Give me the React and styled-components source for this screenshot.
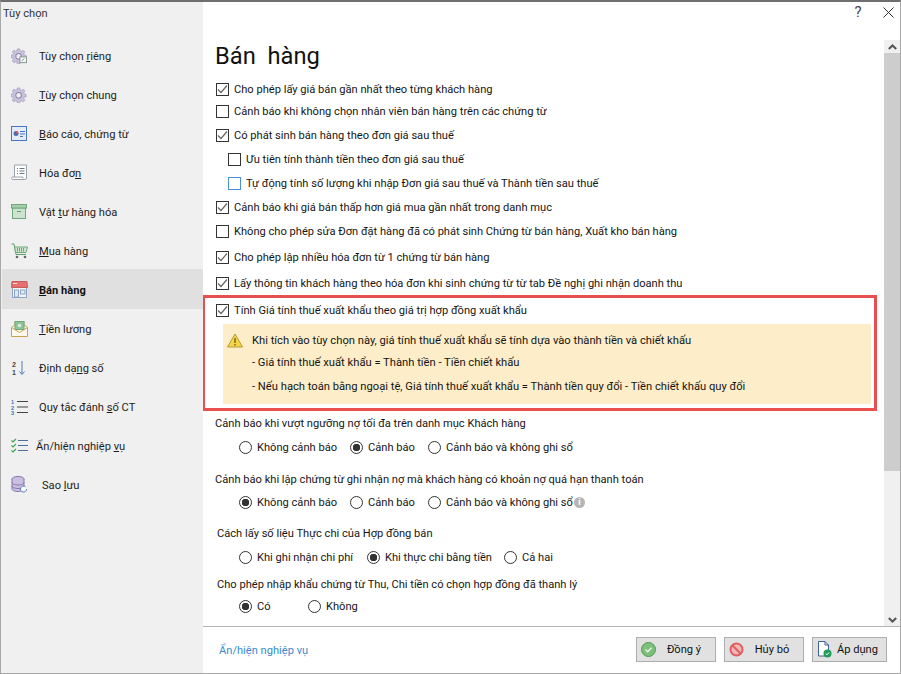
import styled, { createGlobalStyle } from 'styled-components'

const GlobalStyle = createGlobalStyle`
    html, body {
        margin: 0;
        padding: 0;
        background: #fff;
        font-family: Roboto, "Open Sans", sans-serif;
        font-size: 11.12px;
        color: #151515;
    }
`

const GearIcon = ({ badge }) => (
    <svg width="16" height="16" viewBox="0 0 18 18">
        <path d="M7.2 1h2.6l.5 2.2 1.4.6 2-1.2 1.8 1.8-1.2 2 .6 1.4 2.1.5v2.6l-2.1.5-.6 1.4 1.2 2-1.8 1.8-2-1.2-1.4.6-.5 2.2H7.2l-.5-2.2-1.4-.6-2 1.2-1.8-1.8 1.2-2-.6-1.4L0 10.700V8.100l2.100-.5.6-1.400-1.200-2 1.800-1.800 2 1.200 1.400-.6z" fill="#c9c2dc" stroke="#9c92b8" strokeWidth=".7" />
        <circle cx="8.500" cy="9.400" r="3.200" fill="#eee" stroke="#8f84ad" strokeWidth="1.200" />
        {badge && <rect x="10" y="10" width="7.500" height="6.500" fill="#f5f5f5" stroke="#7f8f8a" />}
        {badge && <path d="M12 14.500l3-2.500" stroke="#5aa06a" />}
    </svg>
)

const ReportIcon = () => (
    <svg width="17" height="16" viewBox="0 0 17 16">
        <rect x=".5" y=".5" width="15" height="14" fill="#e4ecf9" stroke="#4a74c4" />
        <circle cx="5" cy="7.500" r="2.500" fill="#4a6fb5" />
        <path d="M5 7.500V5a2.500 2.500 0 0 1 2.500 2.500z" fill="#d5556a" />
        <path d="M9 5.500h5M9 8h5M9 10.500h3" stroke="#4a74c4" />
    </svg>
)

const InvoiceIcon = () => (
    <svg width="17" height="17" viewBox="0 0 17 17">
        <path d="M3.500 13V1h12v13a1.500 1.500 0 0 1-1.500 1.500H1.500C.5 15.500.5 13 1.500 13H12v1.500" fill="#fff" stroke="#9aa3ad" />
        <path d="M6 4.500h1M6 7h1M6 9.500h1M8.500 4.500h5M8.500 7h5M8.500 9.500h5" stroke="#6b7680" />
    </svg>
)

const BoxIcon = () => (
    <svg width="16" height="15" viewBox="0 0 16 15">
        <rect x="1.500" y="4" width="13" height="10.500" fill="#cde3d0" stroke="#6da97b" />
        <rect x=".5" y=".5" width="15" height="3.500" fill="#a5cfae" stroke="#6da97b" />
        <path d="M6 7.500h4" stroke="#5d9a6c" />
    </svg>
)

const CartIcon = () => (
    <svg width="17" height="16" viewBox="0 0 17 16">
        <path d="M.5 1h2.500l2 10.500h10" fill="none" stroke="#5aa06a" />
        <path d="M3.600 4h12.900l-1.500 5.500H4.600z" fill="#cfe6d3" stroke="#6da97b" />
        <path d="M6.500 5v3.500M8.500 5v3.500M10.500 5v3.500M12.500 5v3.500" stroke="#6da97b" />
        <circle cx="6" cy="14" r="1.300" fill="#666" />
        <circle cx="14" cy="14" r="1.300" fill="#666" />
    </svg>
)

const StoreIcon = () => (
    <svg width="17" height="17" viewBox="0 0 17 17">
        <rect x="1.500" y="6" width="14" height="10.500" fill="#f4f4f4" stroke="#8da6c8" />
        <rect x="3.500" y="9" width="4" height="7" fill="#dfe8f4" stroke="#8da6c8" />
        <rect x="9.500" y="9" width="4.500" height="4" fill="#dfe8f4" stroke="#8da6c8" />
        <path d="M1 .5h15l.5 6H.5z" fill="#e66f6f" stroke="#c85c5c" />
        <path d="M2 2.500h4" stroke="#f6dede" />
    </svg>
)

const SalaryIcon = () => (
    <svg width="17" height="16" viewBox="0 0 17 16">
        <path d="M.5 6.500L4 4v-3.500h9V4l3.500 2.500v9H.5z" fill="#fdf8ec" stroke="#c9a24e" />
        <rect x="4" y=".5" width="9" height="8" fill="#8cc49a" stroke="#6da97b" />
        <circle cx="8.500" cy="4.500" r="1.800" fill="#d7ecdc" />
        <path d="M.5 6.500l8 5 8-5" fill="none" stroke="#c9a24e" />
    </svg>
)

const SortIcon = () => (
    <svg width="16" height="16" viewBox="0 0 16 16">
        <text x="1" y="7" fontSize="7" fontWeight="700" fontFamily="Liberation Sans" fill="#444">2</text>
        <text x="1" y="15" fontSize="7" fontWeight="700" fontFamily="Liberation Sans" fill="#444">1</text>
        <path d="M11 1v13M8.500 11.500L11 14.500l2.500-3" fill="none" stroke="#4f7fb8" />
    </svg>
)

const NumberedIcon = () => (
    <svg width="17" height="16" viewBox="0 0 17 16">
        <text x="0" y="5" fontSize="5.500" fontWeight="700" fontFamily="Liberation Sans" fill="#3f73b5">1</text>
        <text x="0" y="10.500" fontSize="5.500" fontWeight="700" fontFamily="Liberation Sans" fill="#3f73b5">2</text>
        <text x="0" y="16" fontSize="5.500" fontWeight="700" fontFamily="Liberation Sans" fill="#3f73b5">3</text>
        <path d="M6 2.500h11M6 8h11M6 13.500h11" stroke="#444" />
    </svg>
)

const CheckListIcon = () => (
    <svg width="17" height="15" viewBox="0 0 17 15">
        <path d="M.5 2.500l1.500 1.500L5 1M.5 7.500l1.500 1.500 3-3M.5 12.500l1.500 1.500 3-3" fill="none" stroke="#3aa655" strokeWidth="1.200" />
        <path d="M7 2.500h10M7 7.500h10M7 12.500h10" stroke="#4d6f9c" />
    </svg>
)

const BackupIcon = () => (
    <svg width="17" height="17" viewBox="0 0 17 17">
        <ellipse cx="7" cy="3" rx="6" ry="2.500" fill="#cbbfe0" stroke="#8674ab" />
        <path d="M1 3v10c0 1.400 2.700 2.500 6 2.500s6-1.100 6-2.500V3" fill="#cbbfe0" stroke="#8674ab" />
        <path d="M1 6.500c0 1.400 2.700 2.500 6 2.500s6-1.100 6-2.500M1 10c0 1.400 2.700 2.500 6 2.500s6-1.100 6-2.500" fill="none" stroke="#8674ab" />
        <path d="M15.500 13a3 3 0 1 1-1-2.200" fill="#fff" stroke="#4f7fb8" />
    </svg>
)

const CheckTick = () => (
    <svg width="11" height="11" viewBox="0 0 11 11">
        <path d="M1 5.500l3 3 6-7" fill="none" stroke="#666" strokeWidth="1.200" />
    </svg>
)

const menu = [
    { icon: <GearIcon badge />, label: <>Tùy chọn <u>r</u>iêng</> },
    { icon: <GearIcon />, label: <><u>T</u>ùy chọn chung</> },
    { icon: <ReportIcon />, label: <><u>B</u>áo cáo, chứng từ</> },
    { icon: <InvoiceIcon />, label: <>Hóa đơ<u>n</u></> },
    { icon: <BoxIcon />, label: <>Vật <u>t</u>ư hàng hóa</> },
    { icon: <CartIcon />, label: <><u>M</u>ua hàng</> },
    { icon: <StoreIcon />, label: <><u>B</u>án hàng</>, active: true },
    { icon: <SalaryIcon />, label: <><u>T</u>iền lương</> },
    { icon: <SortIcon />, label: <>Định dạ<u>n</u>g số</> },
    { icon: <NumberedIcon />, label: <>Quy tắc đánh <u>s</u>ố CT</> },
    { icon: <CheckListIcon />, label: <>Ẩn/hiện nghiệp <u>v</u>ụ</>, textShift: -3 },
    { icon: <BackupIcon />, label: <>Sao <u>l</u>ưu</>, textShift: 3 },
]

const Check = ({ on, focus, children, indent, gap }) => (
    <CheckRow $indent={indent} $gap={gap}>
        <CheckBox $focus={focus}>{on && <CheckTick />}</CheckBox>
        <span>{children}</span>
    </CheckRow>
)

const Radios = ({ gap, items }) => (
    <RadioRow $gap={gap}>
        {items.map((item) => (
            <RadioItem key={item.text} $width={item.width}>
                <RadioDot $on={item.on} />
                <span>{item.text}</span>
                {item.info && <InfoDot>i</InfoDot>}
            </RadioItem>
        ))}
    </RadioRow>
)

const App = () => {
    return (
        <Window>
            <GlobalStyle />
            <Sidebar>
                <DialogTitle>Tùy chọn</DialogTitle>
                <Menu>
                    {menu.map((item, i) => (
                        <MenuItem key={i} $active={item.active}>
                            <MenuIcon>{item.icon}</MenuIcon>
                            <MenuLabel $shift={item.textShift}>{item.label}</MenuLabel>
                        </MenuItem>
                    ))}
                </Menu>
            </Sidebar>
            <Main>
                <TopBar>
                    <HelpButton>?</HelpButton>
                    <CloseButton>
                        <svg width="11" height="11" viewBox="0 0 11 11">
                            <path d="M.5.500l10 10M10.500.500l-10 10" stroke="#333" />
                        </svg>
                    </CloseButton>
                </TopBar>
                <ScrollArea>
                    <Content>
                        <Heading>Bán&nbsp; hàng</Heading>
                        <Check on gap={0}>Cho phép lấy giá bán gần nhất theo từng khách hàng</Check>
                        <Check gap={4}>Cảnh báo khi không chọn nhân viên bán hàng trên các chứng từ</Check>
                        <Check on>Có phát sinh bán hàng theo đơn giá sau thuế</Check>
                        <Check indent={12}>Ưu tiên tính thành tiền theo đơn giá sau thuế</Check>
                        <Check indent={12} focus>Tự động tính số lượng khi nhập Đơn giá sau thuế và Thành tiền sau thuế</Check>
                        <Check on>Cảnh báo khi giá bán thấp hơn giá mua gần nhất trong danh mục</Check>
                        <Check>Không cho phép sửa Đơn đặt hàng đã có phát sinh Chứng từ bán hàng, Xuất kho bán hàng</Check>
                        <Check on gap={8}>Cho phép lập nhiều hóa đơn từ 1 chứng từ bán hàng</Check>
                        <Check on gap={8}>Lấy thông tin khách hàng theo hóa đơn khi sinh chứng từ từ tab Đề nghị ghi nhận doanh thu</Check>
                        <Highlight>
                            <Check on gap={0}>Tính Giá tính thuế xuất khẩu theo giá trị hợp đồng xuất khẩu</Check>
                            <Notice>
                                <WarnIcon>
                                    <svg width="16" height="15" viewBox="0 0 16 15">
                                        <path d="M8 1l7.500 13H.5z" fill="#f5d547" stroke="#b59a3a" strokeLinejoin="round" />
                                        <path d="M8 5v5M8 11v1.500" stroke="#6b5a1a" strokeWidth="1.300" />
                                    </svg>
                                </WarnIcon>
                                <NoticeText>
                                    <NoticeLine $height={22}>Khi tích vào tùy chọn này, giá tính thuế xuất khẩu sẽ tính dựa vào thành tiền và chiết khấu</NoticeLine>
                                    <NoticeLine $height={22}>- Giá tính thuế xuất khẩu = Thành tiền - Tiền chiết khấu</NoticeLine>
                                    <NoticeLine $height={26}>- Nếu hạch toán bằng ngoại tệ, Giá tính thuế xuất khẩu = Thành tiền quy đổi - Tiền chiết khấu quy đổi</NoticeLine>
                                </NoticeText>
                            </Notice>
                        </Highlight>
                        <GroupLabel $gap={3}>Cảnh báo khi vượt ngưỡng nợ tối đa trên danh mục Khách hàng</GroupLabel>
                        <Radios gap={6} items={[
                            { text: 'Không cảnh báo', width: 111 },
                            { text: 'Cảnh báo', on: true, width: 78 },
                            { text: 'Cảnh báo và không ghi sổ' },
                        ]} />
                        <GroupLabel $gap={14}>Cảnh báo khi lập chứng từ ghi nhận nợ mà khách hàng có khoản nợ quá hạn thanh toán</GroupLabel>
                        <Radios gap={5} items={[
                            { text: 'Không cảnh báo', on: true, width: 111 },
                            { text: 'Cảnh báo', width: 78 },
                            { text: 'Cảnh báo và không ghi sổ', info: true },
                        ]} />
                        <GroupLabel $gap={13} $left={1}>Cách lấy số liệu Thực chi của Hợp đồng bán</GroupLabel>
                        <Radios gap={6} items={[
                            { text: 'Khi ghi nhận chi phí', width: 128 },
                            { text: 'Khi thực chi bằng tiền', on: true, width: 137 },
                            { text: 'Cả hai' },
                        ]} />
                        <GroupLabel $gap={9} $left={1}>Cho phép nhập khẩu chứng từ Thu, Chi tiền có chọn hợp đồng đã thanh lý</GroupLabel>
                        <Radios gap={4} items={[
                            { text: 'Có', on: true, width: 69 },
                            { text: 'Không' },
                        ]} />
                    </Content>
                    <ScrollBar>
                        <ScrollArrow>
                            <svg width="9" height="6" viewBox="0 0 9 6"><path d="M.8 5L4.500 1.500 8.200 5" fill="none" stroke="#555" strokeWidth="2" /></svg>
                        </ScrollArrow>
                        <ScrollThumb />
                        <ScrollTrack />
                        <ScrollArrow>
                            <svg width="9" height="6" viewBox="0 0 9 6"><path d="M.8 1L4.500 4.500 8.200 1" fill="none" stroke="#555" strokeWidth="2" /></svg>
                        </ScrollArrow>
                    </ScrollBar>
                </ScrollArea>
                <Footer>
                    <FooterLink>Ẩn/hiện nghiệp vụ</FooterLink>
                    <Button $width={80}>
                        <svg width="15" height="15" viewBox="0 0 15 15">
                            <circle cx="7.500" cy="7.500" r="7" fill="#7cc07c" stroke="#4f9a55" />
                            <path d="M4.500 7.500l2.200 2.200 3.800-4" fill="none" stroke="#eaf6ea" strokeWidth="1.400" />
                        </svg>
                        <ButtonText>Đồng ý</ButtonText>
                    </Button>
                    <Button $width={80}>
                        <svg width="15" height="15" viewBox="0 0 15 15">
                            <circle cx="7.500" cy="7.500" r="6" fill="#f3b7b7" stroke="#df5f62" strokeWidth="2" />
                            <path d="M3.500 3.500l8 8" stroke="#df5f62" strokeWidth="2" />
                        </svg>
                        <ButtonText>Hủy bỏ</ButtonText>
                    </Button>
                    <Button $width={75}>
                        <svg width="15" height="17" viewBox="0 0 15 17">
                            <path d="M1.500.5h6.500l3.500 3.500v11h-10z" fill="#fff" stroke="#3f5f95" />
                            <path d="M8 .5v3.500h3.500" fill="none" stroke="#3f5f95" />
                            <circle cx="10.500" cy="12.500" r="4" fill="#1f9d57" />
                            <path d="M8.700 12.500l1.300 1.300 2.200-2.400" fill="none" stroke="#fff" />
                        </svg>
                        <ButtonText>Áp dụng</ButtonText>
                    </Button>
                </Footer>
            </Main>
        </Window>
    )
}

const Window = styled.div`
    width: 901px;
    height: 674px;
    box-sizing: border-box;
    display: flex;
    overflow: hidden;
    background: #fff;
    border-top: 2px solid #6f6f6f;
    border-left: 1px solid #a8a8a8;
    border-right: 1px solid #a8a8a8;
    border-bottom: 1px solid #a8a8a8;
`

const Sidebar = styled.div`
    width: 202px;
    flex: none;
    background: #f0f0f0;
    display: flex;
    flex-direction: column;
`

const DialogTitle = styled.div`
    height: 34px;
    line-height: 23px;
    padding-left: 2px;
    color: #333;
`

const Menu = styled.div`
    display: flex;
    flex-direction: column;
    padding-left: 1px;
`

const MenuItem = styled.div`
    height: ${(p) => (p.$active ? 40 : 39)}px;
    margin-top: ${(p) => (p.$active ? -1 : 0)}px;
    display: flex;
    align-items: center;
    background: ${(p) => (p.$active ? '#e0e0e0' : 'transparent')};
    font-weight: ${(p) => (p.$active ? 700 : 400)};
    color: ${(p) => (p.$active ? '#111' : '#1c1c1c')};
`

const MenuIcon = styled.span`
    width: 37px;
    flex: none;
    box-sizing: border-box;
    padding-left: 9px;
    display: flex;
`

const MenuLabel = styled.span`
    margin-left: ${(p) => p.$shift || 0}px;
    padding-top: 2px;
    white-space: nowrap;
`

const Main = styled.div`
    flex: 1;
    min-width: 0;
    display: flex;
    flex-direction: column;
`

const TopBar = styled.div`
    height: 38px;
    flex: none;
    display: flex;
    justify-content: flex-end;
    align-items: flex-start;
`

const HelpButton = styled.span`
    width: 20px;
    margin-top: 1px;
    margin-right: 15px;
    font-size: 15px;
    line-height: 18px;
    color: #444;
    text-align: center;
`

const CloseButton = styled.span`
    width: 11px;
    margin-top: 5px;
    margin-right: 6px;
    line-height: 0;
`

const ScrollArea = styled.div`
    flex: 1;
    min-height: 0;
    display: flex;
`

const Content = styled.div`
    flex: 1;
    min-width: 0;
    overflow: hidden;
    padding-left: 13px;
`

const Heading = styled.h1`
    margin: 0 0 0 -1px;
    height: 40px;
    font-size: 23.7px;
    line-height: 32px;
    font-weight: 400;
    color: #111;
`

const CheckRow = styled.label`
    height: 18px;
    margin-top: ${(p) => (p.$gap === undefined ? 6 : p.$gap)}px;
    margin-left: ${(p) => p.$indent || 0}px;
    display: flex;
    align-items: center;
    gap: 5px;
    white-space: nowrap;
`

const CheckBox = styled.span`
    width: 13px;
    height: 13px;
    flex: none;
    box-sizing: border-box;
    border: 1px solid ${(p) => (p.$focus ? '#4a90d9' : '#333')};
    background: #fff;
    display: flex;
    align-items: center;
    justify-content: center;
`

const Highlight = styled.div`
    width: 675px;
    height: 116px;
    box-sizing: border-box;
    margin: 3px 0 0 -14px;
    padding: 3px 3px 0 11px;
    border: 3px solid #e8504f;
`

const Notice = styled.div`
    height: 80px;
    margin: 5px 0 0 7px;
    padding: 0 0 0 4px;
    background: #fdedc8;
    display: flex;
`

const WarnIcon = styled.div`
    width: 25px;
    flex: none;
    padding-top: 9px;
    line-height: 0;
`

const NoticeText = styled.div`
    padding-top: 6px;
    display: flex;
    flex-direction: column;
    font-size: 11.2px;
`

const NoticeLine = styled.div`
    height: ${(p) => p.$height}px;
    line-height: ${(p) => p.$height}px;
    white-space: nowrap;
`

const GroupLabel = styled.div`
    height: 18px;
    line-height: 20px;
    margin-top: ${(p) => p.$gap}px;
    margin-left: ${(p) => p.$left || -1}px;
    white-space: nowrap;
`

const RadioRow = styled.div`
    height: 18px;
    margin-top: ${(p) => p.$gap}px;
    padding-left: 23px;
    display: flex;
    align-items: center;
`

const RadioItem = styled.label`
    width: ${(p) => (p.$width ? `${p.$width}px` : 'auto')};
    display: flex;
    align-items: center;
    gap: 5px;
    white-space: nowrap;
`

const RadioDot = styled.span`
    width: 13px;
    height: 13px;
    flex: none;
    box-sizing: border-box;
    border: 1px solid #333;
    border-radius: 50%;
    background: ${(p) => (p.$on ? 'radial-gradient(circle, #333 0 3.500px, #fff 4px)' : '#fff')};
`

const InfoDot = styled.span`
    width: 11px;
    height: 11px;
    margin-left: -4px;
    border-radius: 50%;
    background: #b5b5b5;
    color: #fff;
    font-size: 9px;
    font-weight: 700;
    line-height: 11px;
    text-align: center;
`

const ScrollBar = styled.div`
    width: 16px;
    flex: none;
    display: flex;
    flex-direction: column;
`

const ScrollArrow = styled.div`
    height: 13px;
    flex: none;
    background: #f0f0f0;
    display: flex;
    align-items: center;
    justify-content: center;
`

const ScrollThumb = styled.div`
    height: 418px;
    flex: none;
    background: #cdcdcd;
`

const ScrollTrack = styled.div`
    flex: 1;
    background: #f0f0f0;
`

const Footer = styled.div`
    height: 47px;
    flex: none;
    box-sizing: border-box;
    border-top: 1px solid #b4b4b4;
    padding: 10px 13px 0 16px;
    display: flex;
    align-items: flex-start;
    gap: 8px;
`

const FooterLink = styled.a`
    margin-right: auto;
    margin-top: 7px;
    color: #3b8ad0;
`

const Button = styled.div`
    width: ${(p) => p.$width}px;
    height: 25px;
    box-sizing: border-box;
    border: 1px solid #adadad;
    background: #e1e1e1;
    padding: 0 3px 0 4px;
    display: flex;
    align-items: center;
`

const ButtonText = styled.span`
    flex: 1;
    text-align: center;
    color: #111;
`

export default App
